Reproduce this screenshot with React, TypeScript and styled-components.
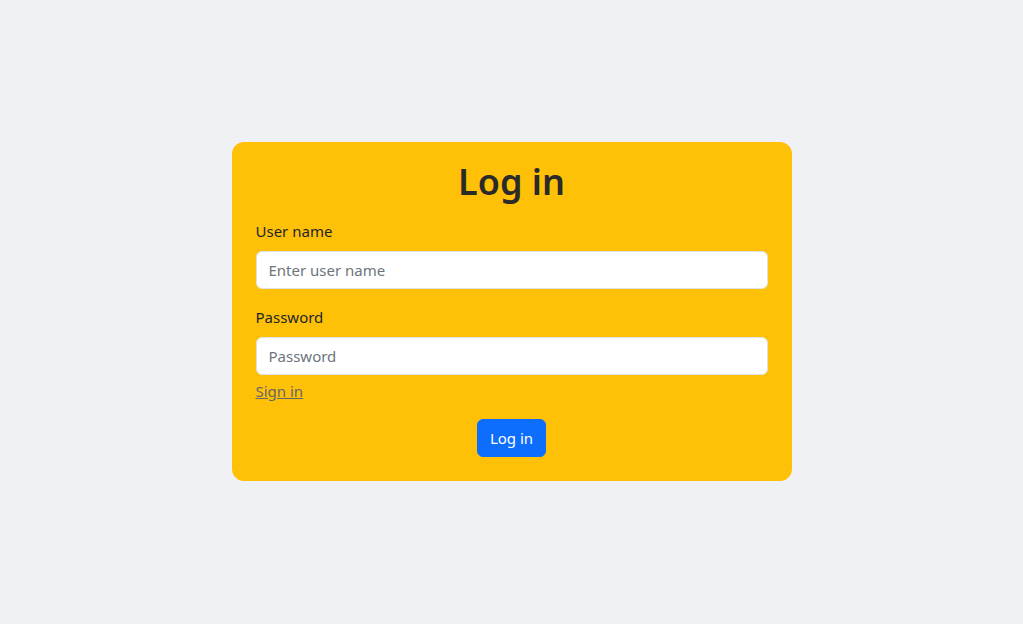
import styled, { createGlobalStyle } from "styled-components";
import { useState } from "react";

const GlobalStyle = createGlobalStyle`
  html, body {
    margin: 0;
    padding: 0;
    height: 100%;
  }

  body {
    background: #f0f1f5;
    font-family: "Noto Sans", "Open Sans", sans-serif;
    color: #212529;
  }

  #root {
    height: 100%;
  }
`;

const Page = styled.div`
  display: flex;
  justify-content: center;
  align-items: center;
  box-sizing: border-box;
  min-height: 624px;
  height: 100%;
  padding-bottom: 1px;
`;

const Card = styled.form`
  display: flex;
  flex-direction: column;
  width: 560px;
  box-sizing: border-box;
  padding: 16px 24px 24px;
  background: #ffc107;
  border-radius: 12px;
`;

const Title = styled.h1`
  margin: 0 0 13px;
  text-align: center;
  font-size: 36px;
  line-height: 48px;
  font-weight: 600;
  color: #2a2a28;
`;

const Field = styled.div<{ $last?: boolean }>`
  display: flex;
  flex-direction: column;
  margin-bottom: ${(p) => (p.$last ? "4px" : "16px")};
`;

const Label = styled.label`
  font-size: 15px;
  line-height: 24px;
  margin-bottom: 8px;
`;

const Input = styled.input`
  height: 38px;
  box-sizing: border-box;
  padding: 6px 12px;
  font-family: inherit;
  font-size: 15px;
  color: #212529;
  background: #fff;
  border: 1px solid #dee2e6;
  border-radius: 6px;
  outline: none;

  &::placeholder {
    color: #6c757d;
  }
`;

const SignLink = styled.a`
  align-self: flex-start;
  font-size: 15px;
  line-height: 24px;
  color: #66666a;
  text-decoration: underline;
  cursor: pointer;
`;

const Actions = styled.div`
  display: flex;
  justify-content: center;
  margin-top: 16px;
`;

const Button = styled.button`
  height: 38px;
  padding: 6px 12px;
  font-family: inherit;
  font-size: 15px;
  line-height: 24px;
  color: #fff;
  background: #0d6efd;
  border: 1px solid #0d6efd;
  border-radius: 6px;
  cursor: pointer;
`;

export default function App() {
  const [userName, setUserName] = useState("");
  const [password, setPassword] = useState("");

  return (
    <>
      <GlobalStyle />
      <Page>
        <Card onSubmit={(e) => e.preventDefault()}>
          <Title>Log in</Title>
          <Field>
            <Label htmlFor="username">User name</Label>
            <Input
              id="username"
              placeholder="Enter user name"
              value={userName}
              onChange={(e) => setUserName(e.target.value)}
            />
          </Field>
          <Field $last>
            <Label htmlFor="password">Password</Label>
            <Input
              id="password"
              type="password"
              placeholder="Password"
              value={password}
              onChange={(e) => setPassword(e.target.value)}
            />
          </Field>
          <SignLink>Sign in</SignLink>
          <Actions>
            <Button type="submit">Log in</Button>
          </Actions>
        </Card>
      </Page>
    </>
  );
}
